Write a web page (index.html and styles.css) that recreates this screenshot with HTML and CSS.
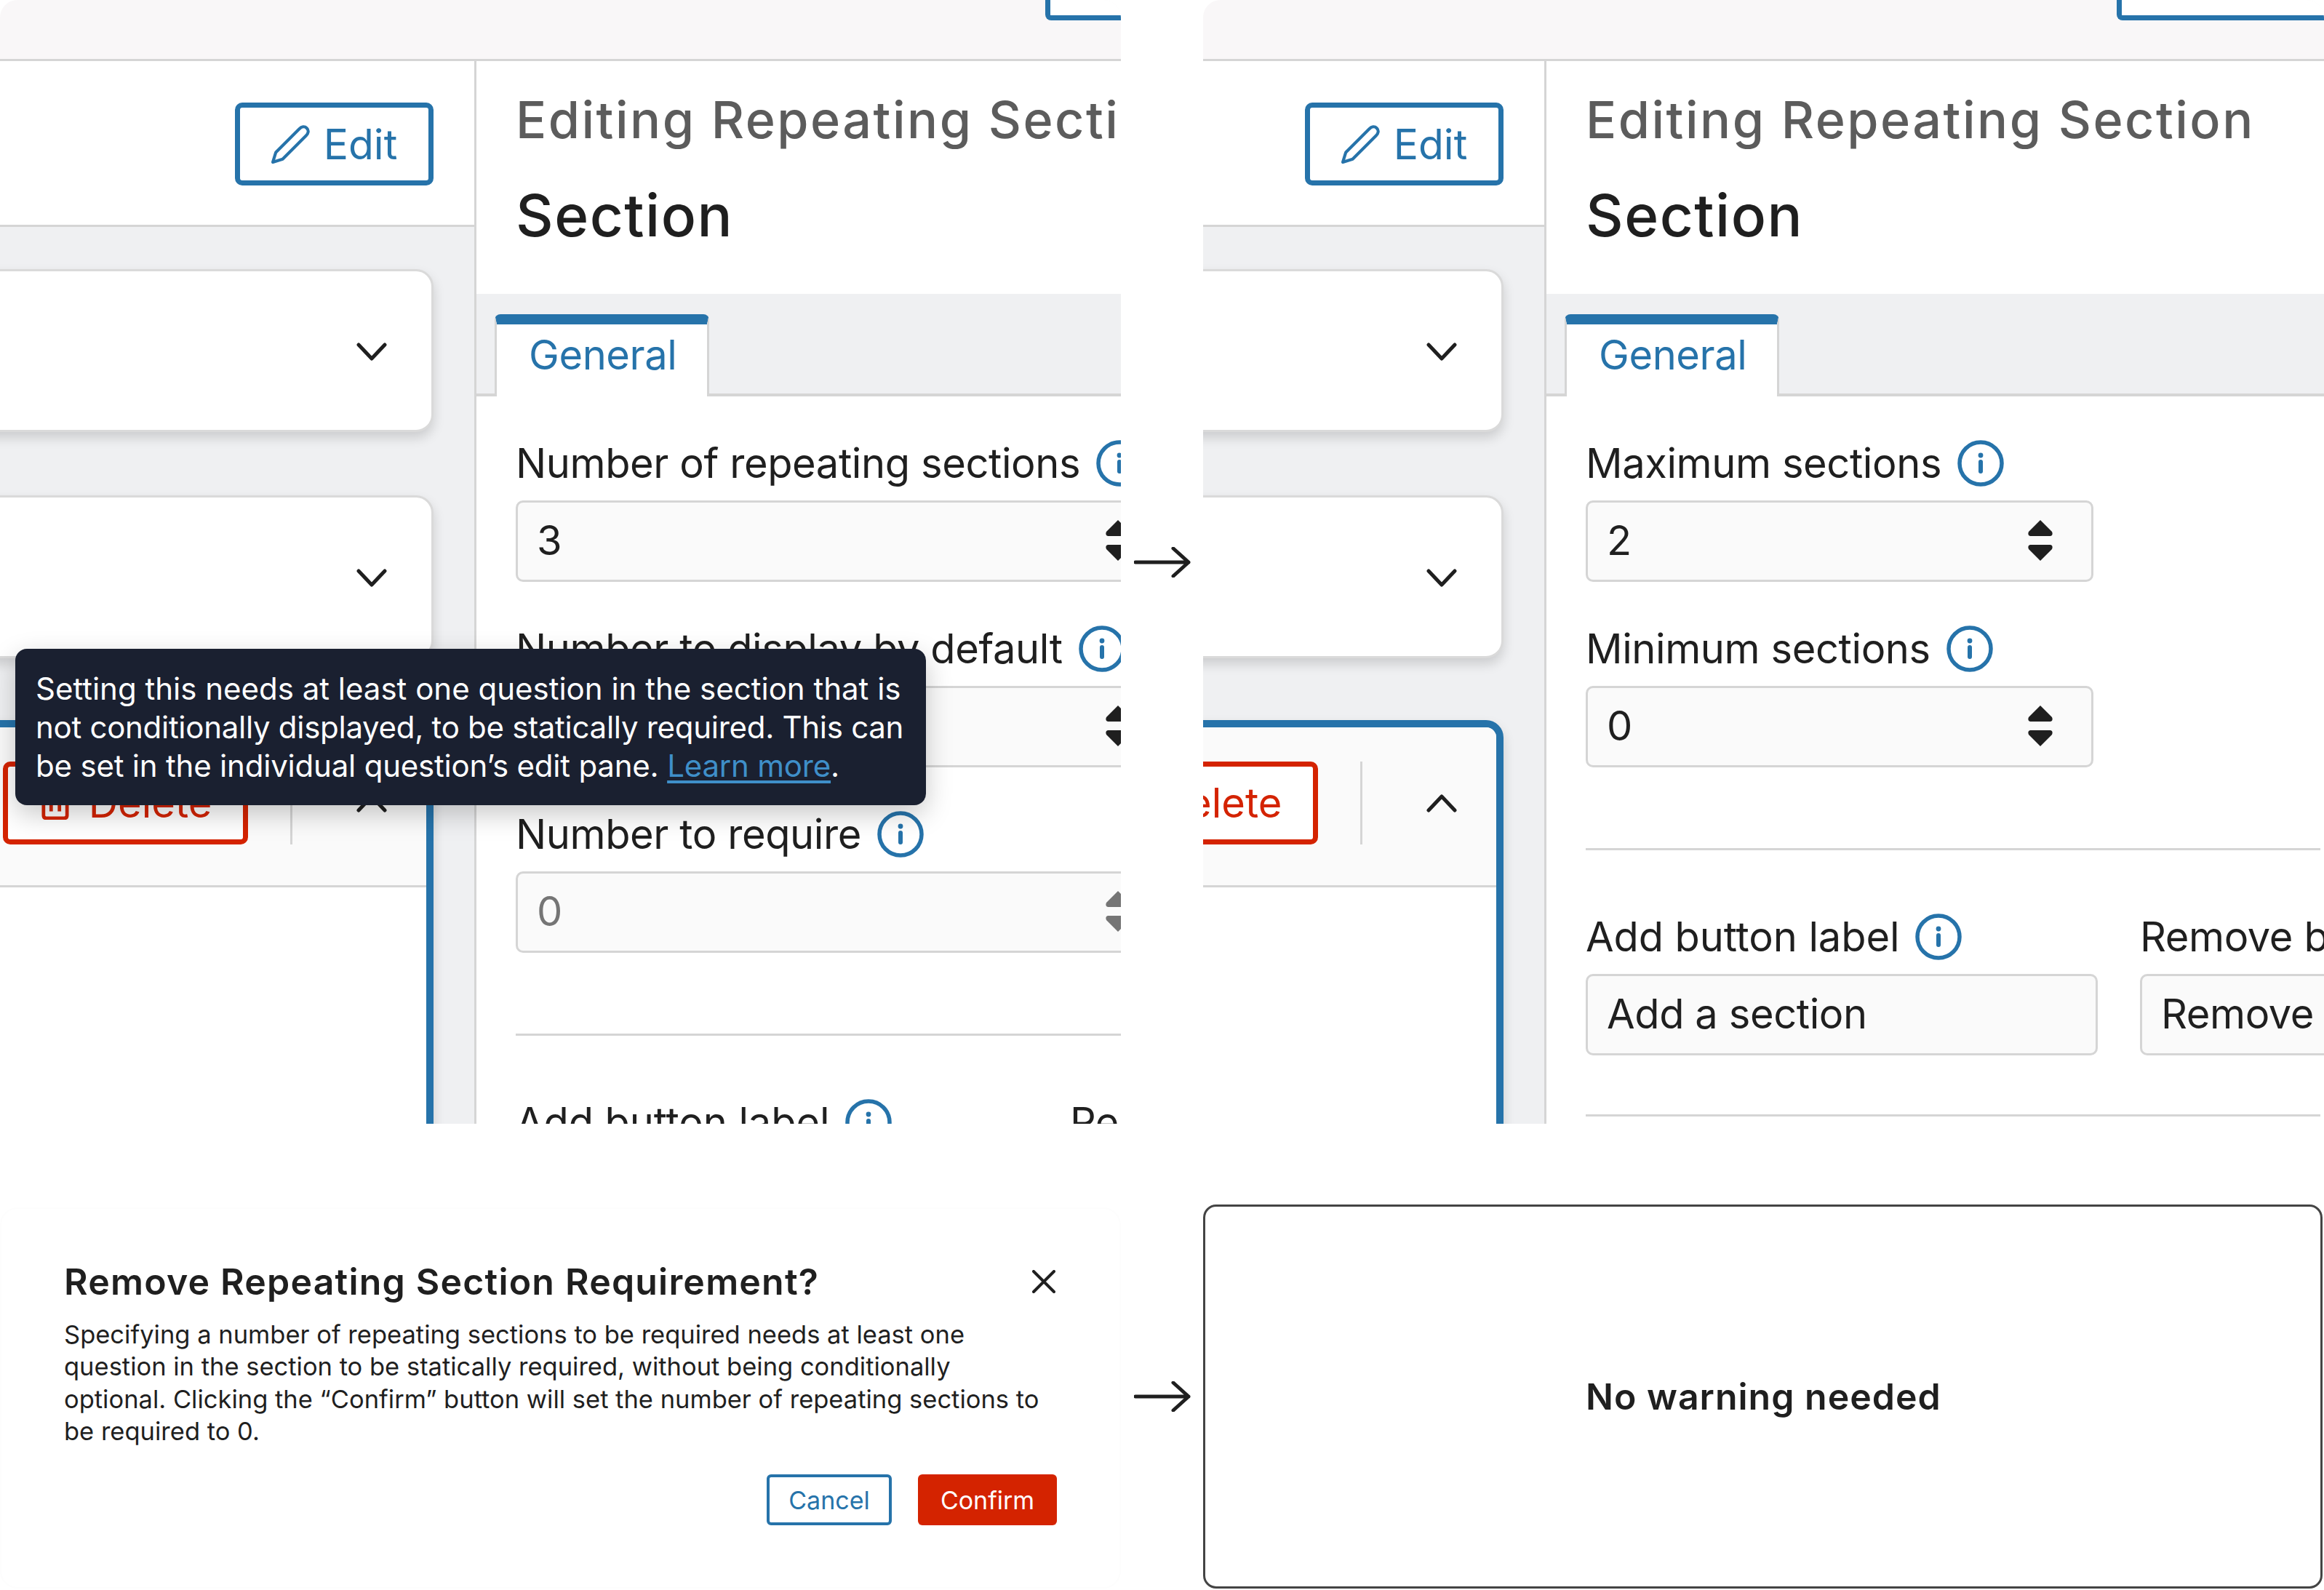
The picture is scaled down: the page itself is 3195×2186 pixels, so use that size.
FILE: index.html
```html
<!DOCTYPE html>
<html lang="en">
<head>
<meta charset="utf-8">
<title>Repeating section settings</title>
<link rel="stylesheet" href="styles.css">
</head>
<body>
<svg class="defs" width="0" height="0" aria-hidden="true">
  <symbol id="info" viewBox="0 0 64 64"><circle cx="32" cy="32" r="29" fill="none" stroke="currentColor" stroke-width="5.5"/><circle cx="32" cy="21" r="3.4" fill="currentColor"/><path d="M32 30v13" fill="none" stroke="currentColor" stroke-width="6" stroke-linecap="round"/></symbol>
  <symbol id="spin" viewBox="0 0 36 58"><path d="M18 1 34 17q2 5-2 6H4q-4-1-2-6Z" fill="currentColor"/><path d="M18 57 34 41q2-5-2-6H4q-4 1-2 6Z" fill="currentColor"/></symbol>
  <symbol id="chev" viewBox="0 0 42 26"><path d="M3 3 21 22 39 3" fill="none" stroke="currentColor" stroke-width="5" stroke-linecap="round" stroke-linejoin="round"/></symbol>
  <symbol id="pencil" viewBox="0 0 52 52"><path d="M2 50 6 37 37 6c3-3 7-4 10-1s2 7-1 10L15 46Z" fill="none" stroke="currentColor" stroke-width="4" stroke-linejoin="round"/></symbol>
  <symbol id="trash" viewBox="0 0 40 48"><path d="M3 12h34v30q0 4-4 4H7q-4 0-4-4Z M13 12V4h14v8M14 20v16M26 20v16" fill="none" stroke="currentColor" stroke-width="5" stroke-linejoin="round"/></symbol>
  <symbol id="arrow" viewBox="0 0 78 42"><path d="M2 21H75M54 2 75 21 54 40" fill="none" stroke="currentColor" stroke-width="5" stroke-linecap="round" stroke-linejoin="round"/></symbol>
</svg>

<main class="sheet">
  <section class="panel">
    <div class="topbar"><div class="topbtn topbtn-cut"></div></div>
    <div class="workspace">
      <div class="builder">
        <div class="builder-head">
          <button class="btn-edit"><svg class="ico-pencil"><use href="#pencil"/></svg>Edit</button>
        </div>
        <div class="builder-list">
          <div class="card"><svg class="ico-chev"><use href="#chev"/></svg></div>
          <div class="card"><svg class="ico-chev"><use href="#chev"/></svg></div>
          <div class="card card-active">
            <div class="card-head">
              <button class="btn-delete"><svg class="ico-trash"><use href="#trash"/></svg>Delete</button>
              <span class="vr"></span>
              <svg class="ico-chev flip"><use href="#chev"/></svg>
            </div>
          </div>
        </div>
      </div>
      <aside class="editor editor-wide">
        <h2 class="editor-title">Editing Repeating Section</h2>
        <h1 class="editor-name">Section</h1>
        <div class="tabs"><div class="tab">General</div></div>
        <div class="form">
          <div class="label-row"><span>Number of repeating sections</span><svg class="ico-info"><use href="#info"/></svg></div>
          <div class="input num"><span>3</span><svg class="ico-spin"><use href="#spin"/></svg></div>
          <div class="label-row next"><span>Number to display by default</span><svg class="ico-info"><use href="#info"/></svg></div>
          <div class="input num"><span>3</span><svg class="ico-spin"><use href="#spin"/></svg></div>
          <div class="label-row next"><span>Number to require</span><svg class="ico-info"><use href="#info"/></svg></div>
          <div class="input num disabled"><span>0</span><svg class="ico-spin"><use href="#spin"/></svg></div>
          <hr class="rule">
          <div class="pair">
            <div class="pair-col"><div class="label-row"><span class="label-wide">Add button label</span><svg class="ico-info"><use href="#info"/></svg></div></div>
            <div class="pair-col"><div class="label-row"><span>Remove button label</span></div></div>
          </div>
        </div>
      </aside>
    </div>
    <div class="tooltip"><span>Setting this needs at least one question in the section that is</span><br><span class="tip-tight">not conditionally displayed, to be statically required. This can</span><br><span class="tip-snug">be set in the individual question’s edit pane. <a class="tip-link" href="#">Learn more</a>.</span></div>
  </section>

  <div class="arrow-cell"><svg class="ico-arrow"><use href="#arrow"/></svg></div>

  <section class="panel">
    <div class="topbar"><div class="topbtn"></div></div>
    <div class="workspace">
      <div class="builder builder-narrow">
        <div class="builder-head">
          <button class="btn-edit"><svg class="ico-pencil"><use href="#pencil"/></svg>Edit</button>
        </div>
        <div class="builder-list">
          <div class="card"><svg class="ico-chev"><use href="#chev"/></svg></div>
          <div class="card"><svg class="ico-chev"><use href="#chev"/></svg></div>
          <div class="card card-active">
            <div class="card-head">
              <button class="btn-delete"><svg class="ico-trash"><use href="#trash"/></svg>Delete</button>
              <span class="vr"></span>
              <svg class="ico-chev flip"><use href="#chev"/></svg>
            </div>
          </div>
        </div>
      </div>
      <aside class="editor">
        <h2 class="editor-title">Editing Repeating Section</h2>
        <h1 class="editor-name">Section</h1>
        <div class="tabs"><div class="tab">General</div></div>
        <div class="form">
          <div class="label-row"><span>Maximum sections</span><svg class="ico-info"><use href="#info"/></svg></div>
          <div class="input num"><span>2</span><svg class="ico-spin"><use href="#spin"/></svg></div>
          <div class="label-row next"><span>Minimum sections</span><svg class="ico-info"><use href="#info"/></svg></div>
          <div class="input num"><span>0</span><svg class="ico-spin"><use href="#spin"/></svg></div>
          <hr class="rule">
          <div class="pair">
            <div class="pair-col">
              <div class="label-row"><span class="label-wide">Add button label</span><svg class="ico-info"><use href="#info"/></svg></div>
              <div class="input"><span>Add a section</span></div>
            </div>
            <div class="pair-col">
              <div class="label-row"><span>Remove button label</span></div>
              <div class="input"><span>Remove this section</span></div>
            </div>
          </div>
          <hr class="rule rule-end">
        </div>
      </aside>
    </div>
  </section>

  <section class="dialog">
    <div class="dialog-head">
      <h3 class="dialog-title">Remove Repeating Section Requirement?</h3>
      <svg class="ico-close" viewBox="0 0 32 32"><path d="M2 2 30 30M30 2 2 30" fill="none" stroke="currentColor" stroke-width="4" stroke-linecap="round"/></svg>
    </div>
    <p class="dialog-body">Specifying a number of repeating sections to be required needs at least one<br>question in the section to be statically required, without being conditionally<br>optional. Clicking the “Confirm” button will set the number of repeating sections to<br>be required to 0.</p>
    <div class="dialog-actions">
      <button class="btn-cancel">Cancel</button>
      <button class="btn-confirm">Confirm</button>
    </div>
  </section>

  <div class="arrow-cell"><svg class="ico-arrow"><use href="#arrow"/></svg></div>

  <section class="empty-box"><strong class="empty-text">No warning needed</strong></section>
</main>
</body>
</html>
```

FILE: styles.css
```css
* { box-sizing: border-box; }
html, body { margin: 0; padding: 0; background: #fff; }
body { font-family: Inter, "Noto Sans", sans-serif; color: #1f1f1f; overflow: hidden; }
.defs { position: absolute; }
button { font-family: inherit; }

.sheet {
  width: 3195px;
  display: grid;
  grid-template-columns: 1541px 113px 1541px;
  grid-template-rows: 1545px 528px;
  row-gap: 111px;
}

.panel {
  position: relative;
  overflow: hidden;
  border-radius: 24px 24px 0 0;
  background: #fff;
}

.topbar {
  height: 84px;
  background: #f9f7f8;
  border-bottom: 3px solid #d5d5d5;
  display: flex;
  justify-content: flex-end;
}
.topbtn {
  flex: none;
  width: 285px;
  height: 28px;
  border: 7px solid #2673aa;
  border-top: 0;
  border-right: 0;
  border-bottom-left-radius: 8px;
  background: #fff;
}
.topbtn-cut { margin-right: -181px; }

.workspace { display: flex; height: 1461px; }

.builder {
  flex: 0 0 655px;
  min-width: 0;
  overflow: hidden;
  background: #eff0f2;
  border-right: 3px solid #d5d5d5;
  display: flex;
  flex-direction: column;
}
.builder-narrow { flex-basis: 472px; }
.builder-head {
  height: 228px;
  flex: none;
  background: #fff;
  border-bottom: 3px solid #d5d5d5;
  padding: 57px 56px 0 0;
  display: flex;
  justify-content: flex-end;
  align-items: flex-start;
}
.btn-edit {
  flex: none;
  width: 273px;
  height: 114px;
  border: 7px solid #2673aa;
  border-radius: 10px;
  background: #fff;
  color: #2673aa;
  font-size: 57px;
  display: flex;
  align-items: center;
  justify-content: center;
  gap: 18px;
  padding: 0;
}
.ico-pencil { width: 54px; height: 54px; }

.builder-list {
  padding: 58px 56px 0 0;
  display: flex;
  flex-direction: column;
  gap: 87px;
  flex: 1;
  min-height: 0;
}
.card {
  margin-left: -400px;
  height: 224px;
  background: #fff;
  border: 3px solid #dadada;
  border-radius: 24px;
  box-shadow: 0 8px 16px rgba(0, 0, 0, .15);
  display: flex;
  align-items: center;
  justify-content: flex-end;
  padding: 4px 61px 0 0;
  flex: none;
}
.card-active {
  margin-top: -2px;
  flex: 1;
  height: auto;
  display: block;
  padding: 0;
  margin-bottom: -40px;
  background: #fff;
  border: 10px solid #2673aa;
}
.card-head {
  height: 220px;
  background: #fafafa;
  border-bottom: 3px solid #d5d5d5;
  border-radius: 14px 14px 0 0;
  display: flex;
  align-items: center;
  justify-content: flex-end;
  padding: 0 54px 9px 0;
}
.btn-delete {
  flex: none;
  width: 337px;
  height: 114px;
  border: 7px solid #d42300;
  border-radius: 10px;
  background: #fff;
  color: #d42300;
  font-size: 56px;
  display: flex;
  align-items: center;
  justify-content: center;
  gap: 27px;
  padding: 0 0 0 3px;
}
.ico-trash { width: 38px; height: 46px; }
.vr { flex: none; width: 3px; height: 114px; margin: 0 88px 0 58px; background: #d5d5d5; }
.ico-chev { width: 42px; height: 26px; color: #1f1f1f; flex: none; }
.flip { transform: scaleY(-1); }

.editor {
  flex: 0 0 1069px;
  width: 1069px;
  background: #fff;
}
.editor-wide { flex-basis: 1300px; width: 1300px; }
.editor-title {
  margin: 0;
  padding: 35px 0 0 54px;
  height: 120px;
  font-size: 70px;
  line-height: 92px;
  font-weight: 500;
  letter-spacing: 2.5px;
  color: #5c5c5c;
  white-space: nowrap;
}
.editor-name {
  margin: 0;
  padding-left: 54px;
  height: 200px;
  font-size: 80px;
  line-height: 184px;
  font-weight: 500;
  letter-spacing: 1.5px;
  color: #1f1f1f;
}
.tabs {
  height: 141px;
  background: #eff0f2;
  border-bottom: 4px solid #d5d5d5;
  padding: 28px 0 0 25px;
}
.tab {
  width: 295px;
  height: 113px;
  background: #fff;
  border: 3px solid #d5d5d5;
  border-top: 14px solid #2673aa;
  border-bottom: 0;
  border-radius: 8px 8px 0 0;
  color: #2673aa;
  font-size: 56px;
  letter-spacing: -.4px;
  line-height: 84px;
  padding-left: 44px;
}

.form { padding: 60px 0 0 54px; font-size: 56px; letter-spacing: -.4px; }
.label-row {
  height: 64px;
  display: flex;
  align-items: center;
  gap: 22px;
  line-height: 64px;
  white-space: nowrap;
  margin-bottom: 19px;
}
.label-row.next { margin-top: 60px; }
.label-wide { letter-spacing: -.1px; }
.ico-info { width: 64px; height: 64px; color: #2673aa; flex: none; }
.input {
  height: 112px;
  background: #fafafa;
  border: 3px solid #d5d5d5;
  border-radius: 10px;
  display: flex;
  align-items: center;
  justify-content: space-between;
  padding: 0 26px 2px;
  white-space: nowrap;
  overflow: hidden;
}
.num { width: 698px; padding-right: 52px; }
.editor-wide .num { width: 901px; }
.disabled { color: #757575; }
.ico-spin { width: 36px; height: 58px; color: #1f1f1f; flex: none; }
.disabled .ico-spin { color: #757575; }

.rule { border: 0; height: 3px; background: #d5d5d5; margin: 111px 0 87px; width: 1010px; }
.rule-end { margin: 81px 0 0; }
.pair { display: flex; gap: 58px; width: 1300px; }
.pair-col { width: 704px; flex: none; }

.tooltip {
  position: absolute;
  left: 21px;
  top: 892px;
  width: 1252px;
  height: 215px;
  background: #1a2030;
  border-radius: 16px;
  box-shadow: 0 12px 36px rgba(0, 0, 0, .22);
  color: #fff;
  font-size: 42px;
  line-height: 53px;
  padding: 28px 0 0 28px;
  white-space: nowrap;
}
.tip-tight { letter-spacing: -.28px; }
.tip-snug { letter-spacing: -.2px; }
.tip-link { color: #3f8fc9; text-decoration: underline; text-underline-offset: 5px; }

.arrow-cell { display: flex; align-items: center; justify-content: center; }
.ico-arrow { width: 78px; height: 42px; color: #1f1f1f; }

.dialog {
  border: 2px solid #fdfdfd;
  border-radius: 24px;
  padding: 74px 86px 0;
  margin-top: 4px;
}
.dialog-head { display: flex; justify-content: space-between; align-items: center; height: 52px; }
.dialog-title { margin: 0; font-size: 50px; line-height: 52px; font-weight: 600; letter-spacing: 1.2px; white-space: nowrap; }
.ico-close { width: 32px; height: 32px; margin-right: 2px; color: #1f1f1f; }
.dialog-body { margin: 25px 0 0; font-size: 34.5px; line-height: 44.3px; white-space: nowrap; }
.dialog-actions { display: flex; justify-content: flex-end; gap: 36px; margin-top: 37px; }
.btn-cancel, .btn-confirm {
  height: 70px;
  font-size: 34px;
  border-radius: 6px;
  padding: 0;
}
.btn-cancel { width: 172px; background: #fff; color: #2673aa; border: 4px solid #2673aa; }
.btn-confirm { width: 191px; background: #d42300; color: #fff; border: 0; }

.empty-box {
  border: 3px solid #444;
  border-radius: 18px;
  display: flex;
  align-items: center;
  padding-left: 523px;
  margin-right: 2px;
}
.empty-text { font-size: 50px; font-weight: 600; letter-spacing: 1px; white-space: nowrap; }
```
